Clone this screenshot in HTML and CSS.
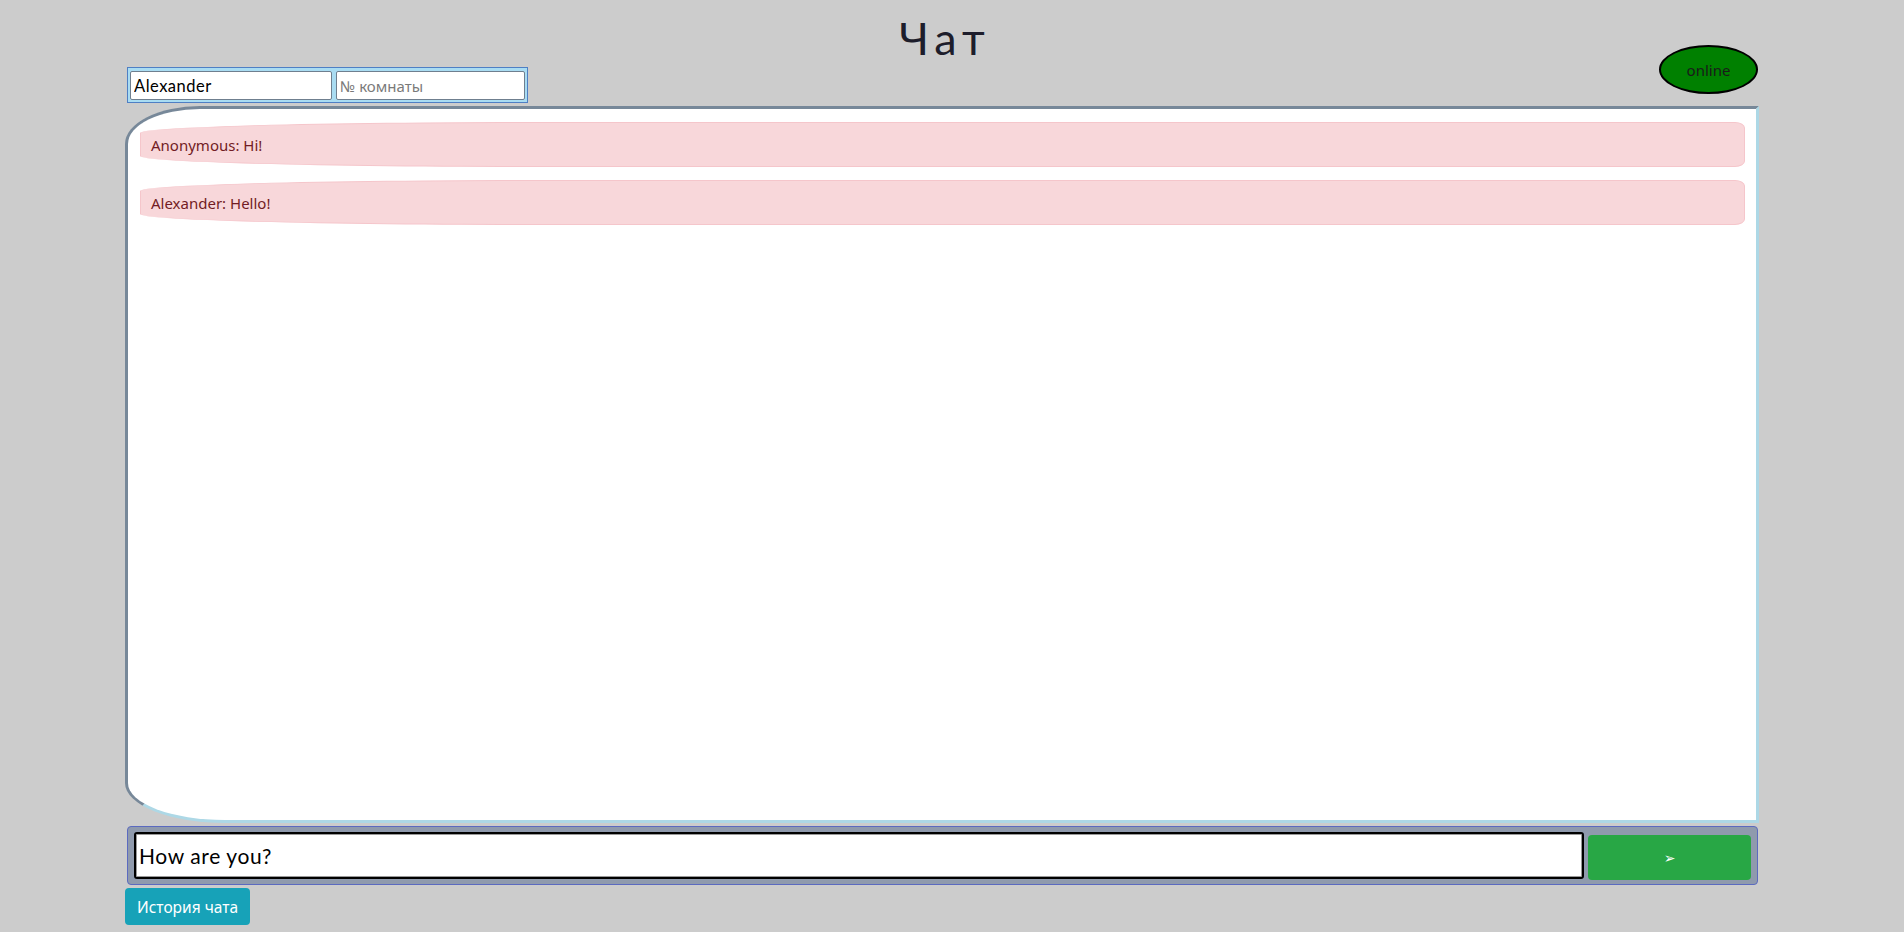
FILE: index.html
```html
<!DOCTYPE html>
<html lang="ru">
<head>
<meta charset="utf-8">
<title>Чат</title>
<link rel="stylesheet" href="styles.css">
</head>
<body>
<div class="wrap">
  <header class="head">
    <div class="ids">
      <input class="name-input" type="text" value="Alexander">
      <input class="room-input" type="text" placeholder="№ комнаты">
    </div>
    <h1 class="title">Чат</h1>
    <div class="status-col">
      <div class="status">online</div>
    </div>
  </header>

  <main class="chat">
    <div class="msg">Anonymous: Hi!</div>
    <div class="msg">Alexander: Hello!</div>
  </main>

  <form class="composer">
    <input class="composer-input" type="text" value="How are you?">
    <button class="send" type="button">&#10146;</button>
  </form>

  <button class="history" type="button">История чата</button>
</div>
</body>
</html>
```

FILE: styles.css
```css
html, body {
  margin: 0;
  padding: 0;
}
body {
  background: #cccccc;
  font-family: "Noto Sans", "Open Sans", sans-serif;
  color: #212529;
}
.wrap {
  width: 1634px;
  margin-left: 125px;
}

/* header */
.head {
  display: grid;
  grid-template-columns: 1fr auto 1fr;
  height: 106px;
}
.ids {
  align-self: end;
  justify-self: start;
  margin: 0 0 3px 2px;
  display: flex;
  gap: 4px;
  padding: 3px 2px 2px 2px;
  background: #a9dcf2;
  border: 1px solid #4f7fc4;
}
.ids input {
  box-sizing: border-box;
  height: 29px;
  border: 1px solid #6f7f8f;
  border-radius: 2px;
  background: #fff;
  outline: none;
  padding: 0 3px;
}
.name-input {
  width: 202px;
  font-family: "Lato", sans-serif;
  font-weight: 400;
  letter-spacing: 0.5px;
  font-size: 16.5px;
  color: #000;
}
.room-input {
  width: 189px;
  font-family: "Noto Sans", sans-serif;
  font-size: 15px;
}
.room-input::placeholder {
  color: #7a7a7a;
}
.title {
  margin: 16px 0 0 0;
  align-self: start;
  font-family: "Lato", sans-serif;
  font-weight: 400;
  font-size: 45px;
  line-height: 44px;
  color: #1d1d2b;
  letter-spacing: 6px;
  padding-left: 6px;
}
.status-col {
  display: flex;
  justify-content: flex-end;
  align-items: flex-start;
  padding-top: 45px;
}
.status {
  box-sizing: border-box;
  width: 99px;
  height: 49px;
  border: 2px solid #000;
  border-radius: 50%;
  background: #008000;
  color: #1a1a1a;
  font-size: 15px;
  display: flex;
  align-items: center;
  justify-content: center;
  margin-right: 1px;
}

/* chat */
.chat {
  box-sizing: border-box;
  height: 717px;
  background: #fff;
  border: 3px solid;
  border-color: #778899 #add8e6 #add8e6 #778899;
  border-top-left-radius: 75px 38px;
  border-bottom-left-radius: 100px 40px;
  padding: 13px 11px 0 12px;
  display: flex;
  flex-direction: column;
  gap: 13px;
}
.msg {
  box-sizing: border-box;
  height: 45px;
  background: #f8d7da;
  border: 1px solid #f5c6cb;
  color: #721c24;
  font-size: 15px;
  display: flex;
  align-items: center;
  padding-left: 10px;
  border-top-left-radius: 400px 11px;
  border-bottom-left-radius: 400px 11px;
  border-top-right-radius: 10px 6px;
  border-bottom-right-radius: 10px 6px;
}

/* composer */
.composer {
  box-sizing: border-box;
  margin: 3px 1px 0 2px;
  height: 59px;
  display: flex;
  align-items: flex-start;
  gap: 4px;
  padding: 5px 6px 0 6px;
  background: #8f9aad;
  border: 1px solid #5b6ac0;
  border-radius: 4px;
}
.composer-input {
  box-sizing: border-box;
  flex: 1;
  height: 47px;
  border: 2px solid #000;
  border-radius: 3px;
  box-shadow: inset 0 0 0 1px #999;
  background: #fff;
  padding: 0 3px;
  font-family: "Lato", sans-serif;
  font-weight: 400;
  letter-spacing: 0.6px;
  font-size: 21px;
  color: #000;
  outline: none;
}
.send {
  box-sizing: border-box;
  width: 163px;
  height: 45px;
  margin-top: 3px;
  border: none;
  border-radius: 4px;
  background: #28a745;
  color: #fff;
  font-family: "DejaVu Sans", sans-serif;
  font-size: 14px;
  padding: 0;
}

.history {
  display: block;
  margin-top: 3px;
  height: 37px;
  padding: 0 12px;
  border: none;
  border-radius: 4px;
  background: #17a2b8;
  color: #fff;
  font-family: "Noto Sans", sans-serif;
  font-size: 15.5px;
}
```
